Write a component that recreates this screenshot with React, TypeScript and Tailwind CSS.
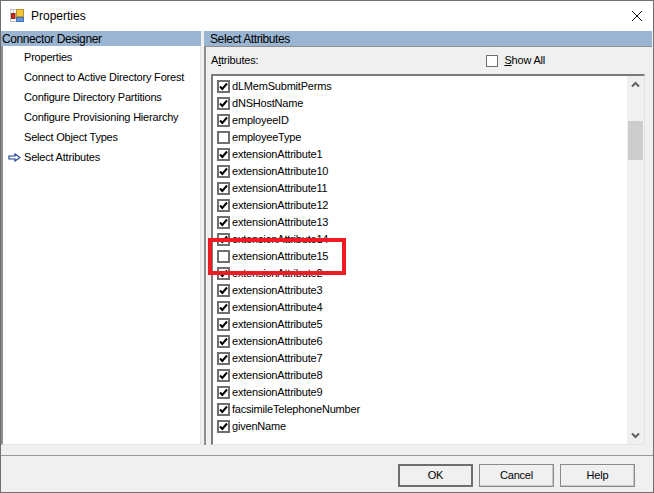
const steps = [
  "Properties",
  "Connect to Active Directory Forest",
  "Configure Directory Partitions",
  "Configure Provisioning Hierarchy",
  "Select Object Types",
  "Select Attributes",
];

const attributes: [string, boolean][] = [
  ["dLMemSubmitPerms", true],
  ["dNSHostName", true],
  ["employeeID", true],
  ["employeeType", false],
  ["extensionAttribute1", true],
  ["extensionAttribute10", true],
  ["extensionAttribute11", true],
  ["extensionAttribute12", true],
  ["extensionAttribute13", true],
  ["extensionAttribute14", true],
  ["extensionAttribute15", false],
  ["extensionAttribute2", true],
  ["extensionAttribute3", true],
  ["extensionAttribute4", true],
  ["extensionAttribute5", true],
  ["extensionAttribute6", true],
  ["extensionAttribute7", true],
  ["extensionAttribute8", true],
  ["extensionAttribute9", true],
  ["facsimileTelephoneNumber", true],
  ["givenName", true],
];

function CheckBox({ checked }: { checked: boolean }) {
  return (
    <span className="flex h-[13px] w-[13px] shrink-0 items-center justify-center border-2 border-[#707070] bg-white">
      {checked && (
        <svg width="9" height="9" viewBox="0 0 9 9">
          <path d="M1 4.5 L3.3 7 L8 1.5" fill="none" stroke="#000" strokeWidth="2" />
        </svg>
      )}
    </span>
  );
}

function DialogButton({ label, primary }: { label: string; primary?: boolean }) {
  return (
    <button
      className={
        "flex h-[23px] w-[75px] items-center justify-center bg-[#f0f0f0] text-black " +
        (primary
          ? "border-2 border-[#6e6e6e]"
          : "border border-[#8a8a8a] shadow-[inset_-1px_-1px_0_#c8c8c8]")
      }
    >
      {label}
    </button>
  );
}

export default function App() {
  return (
    <div
      className="relative flex h-[493px] w-[654px] flex-col overflow-hidden border border-[#6f6f6f] bg-[#f0f0f0] text-[11px] tracking-[-0.2px] text-black"
      style={{ fontFamily: '"Liberation Sans", Arial, sans-serif' }}
    >
      <div className="flex h-[30px] shrink-0 items-center bg-white pl-[9px] pr-[10px]">
        <svg width="16" height="16" viewBox="0 0 16 16" className="shrink-0">
          <path d="M0.5 1.5 H6 M0.5 5.5 H5 M0.5 1 V14 M0.5 13.5 H6 M3.5 1 V5" stroke="#c4c4c4" fill="none" />
          <rect x="6.5" y="1.5" width="7" height="7" fill="#f5c63a" stroke="#b8922a" />
          <rect x="1.5" y="5.5" width="3.5" height="5" fill="#c9261c" stroke="#8e2b22" />
          <rect x="6.5" y="9.5" width="7" height="4" fill="#5f96e0" stroke="#4a70b0" />
        </svg>
        <span className="ml-[5px] text-[12px] tracking-normal text-black">Properties</span>
        <svg width="12" height="12" viewBox="0 0 12 12" className="ml-auto -mt-[1px]">
          <path d="M1 1 L11 11 M11 1 L1 11" stroke="#111" strokeWidth="1" fill="none" />
        </svg>
      </div>

      <div className="flex min-h-0 flex-1 gap-[3px] pr-[1px]">
        <div className="flex w-[200px] shrink-0 flex-col pb-[10px]">
          <div className="flex h-[15px] shrink-0 items-center bg-[#9ab5d1] pl-px text-[12px] leading-none tracking-[-0.4px]">Connector Designer</div>
          <div className="flex-1 border-l-2 border-r-[1px] border-b-[1px] border-l-[#8f8f8f] border-r-[#e3e3e3] border-b-[#e3e3e3] bg-white pt-[1px]">
            {steps.map((s, i) => (
              <div key={s} className="flex h-[20px] items-center whitespace-nowrap">
                <span className="flex w-[21px] shrink-0 pl-[5px]">
                  {i === 5 && (
                    <svg width="13" height="9" viewBox="0 0 13 9">
                      <path d="M1 3 H7 V1 L12 4.5 L7 8 V6 H1 Z" fill="#fff" stroke="#1a3f8f" strokeWidth="1.2" />
                    </svg>
                  )}
                </span>
                <span>{s}</span>
              </div>
            ))}
          </div>
        </div>

        <div className="flex min-w-0 flex-1 flex-col pb-[10px]">
          <div className="flex h-[15px] shrink-0 items-center bg-[#9ab5d1] pl-[6px] text-[12px] leading-none tracking-[-0.4px]">Select Attributes</div>
          <div className="flex min-h-0 flex-1 flex-col border-l-2 border-t border-l-[#8f8f8f] border-t-[#8f8f8f] pl-[5px] pr-[7px]">
            <div className="flex h-[27px] shrink-0 items-center justify-between pr-[100px]">
              <span>
                A<span className="underline">t</span>tributes:
              </span>
              <label className="flex items-center gap-[6px]">
                <span className="h-[12px] w-[12px] border border-[#707070] bg-white" />
                <span>
                  <span className="underline">S</span>how All
                </span>
              </label>
            </div>
            <div className="flex min-h-0 flex-1 overflow-hidden border-l-2 border-t-2 border-r border-b border-l-[#7a7a7a] border-t-[#7a7a7a] border-r-[#e3e3e3] border-b-[#e3e3e3] bg-white">
              <div className="min-w-0 flex-1 pl-[4px] pt-[2px]">
                {attributes.map(([name, checked]) => (
                  <div key={name} className="flex h-[17px] items-center gap-[2px]">
                    <CheckBox checked={checked} />
                    <span className="whitespace-nowrap">{name}</span>
                  </div>
                ))}
              </div>
              <div className="flex w-[17px] shrink-0 flex-col items-center bg-[#f0f0f0]">
                <div className="flex h-[17px] items-center justify-center">
                  <svg width="9" height="7" viewBox="0 0 9 7">
                    <path d="M1 5.5 L4.5 2 L8 5.5" stroke="#606060" strokeWidth="2" fill="none" />
                  </svg>
                </div>
                <div className="mt-[28px] h-[39px] w-[15px] bg-[#cdcdcd]" />
                <div className="mt-auto flex h-[17px] items-center justify-center">
                  <svg width="9" height="7" viewBox="0 0 9 7">
                    <path d="M1 1.5 L4.5 5 L8 1.5" stroke="#606060" strokeWidth="2" fill="none" />
                  </svg>
                </div>
              </div>
            </div>
          </div>
        </div>
      </div>

      <div className="flex h-[37px] shrink-0 items-start justify-end gap-[6px] border-t border-[#9a9a9a] pr-[18px] pt-[8px]">
        <DialogButton label="OK" primary />
        <DialogButton label="Cancel" />
        <DialogButton label="Help" />
      </div>

      {/* red annotation frame over the list */}
      <div className="absolute left-[207px] top-[237px] h-[37px] w-[138px] border-4 border-[#ed1c24]" />
    </div>
  );
}
